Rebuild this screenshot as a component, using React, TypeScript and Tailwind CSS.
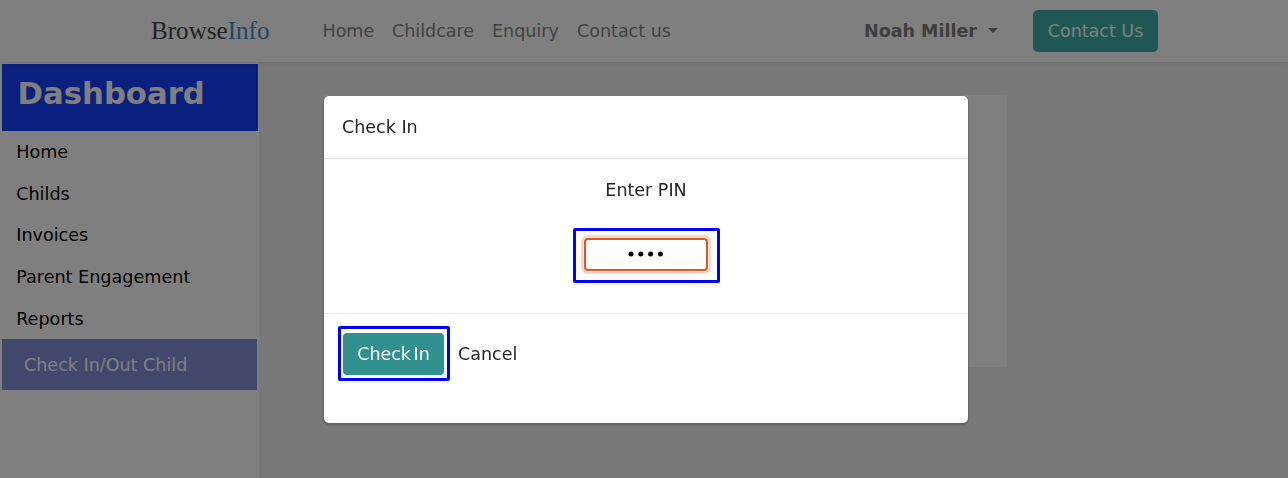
const navLinks = [
  { label: "Home", width: "w-[69.5px]" },
  { label: "Childcare", width: "w-[100px]" },
  { label: "Enquiry", width: "w-[85px]" },
  { label: "Contact us", width: "w-[100px]" },
];
const sideLinks = ["Home", "Childs", "Invoices", "Parent Engagement", "Reports"];

function Header() {
  return (
    <header className="relative z-10 flex h-[62px] shrink-0 items-center bg-white pl-[151px] shadow-[0_1px_3px_rgba(0,0,0,0.1)]">
      <a className="w-[171.5px] pb-px whitespace-nowrap font-['Liberation_Serif',serif] text-[25.1px] leading-none text-[#444444]">
        Browse<span className="text-[#3f8fc8]">Info</span>
      </a>
      <nav className="flex text-[#858585]">
        {navLinks.map((l) => (
          <a key={l.label} className={`${l.width} whitespace-nowrap`}>{l.label}</a>
        ))}
      </nav>
      <div className="ml-auto flex items-center gap-[11px] font-bold text-[#7c7c7c]">
        <span>Noah Miller</span>
        <svg width="10" height="5" viewBox="0 0 10 5" className="-mt-0.5">
          <path d="M0 0h10L5 5z" fill="currentColor" />
        </svg>
      </div>
      <button className="mr-[130px] ml-[35px] h-[42px] w-[125px] rounded-[5px] bg-[#3faea9] whitespace-nowrap text-white">
        Contact Us
      </button>
    </header>
  );
}

function Sidebar() {
  return (
    <aside className="flex w-[259px] shrink-0 flex-col bg-white pt-0.5 pr-px pl-0.5">
      <h1 className="h-[67px] bg-[#1440ff] pt-3 pl-[15.6px] text-[30.7px] leading-9 font-bold text-white">Dashboard</h1>
      <ul className="text-[17.6px] text-black">
        {sideLinks.map((l) => (
          <li key={l} className="flex h-[41.7px] items-center pl-[14.2px]">{l}</li>
        ))}
      </ul>
      <a className="mr-px flex h-[51px] items-center bg-[#8390d8] pl-[22px] text-[17.55px] text-white">Check In/Out Child</a>
    </aside>
  );
}

function PinDots() {
  return (
    <svg width="40" height="6" viewBox="0 0 40 6" fill="#000" className="mb-px">
      {[5, 14.8, 24.6, 34.4].map((x) => (
        <circle key={x} cx={x} cy="3" r="2.5" />
      ))}
    </svg>
  );
}

function CheckInDialog() {
  return (
    <div className="fixed inset-0 z-20 flex items-start bg-black/50 pt-24 pl-[324px]">
      <section role="dialog" className="flex h-[327px] w-[644px] flex-col rounded-[5px] bg-white text-[#212529] shadow-[0_1px_2px_1px_rgba(0,0,0,0.18)]">
        <header className="flex h-[63px] items-center border-b border-[#dee2e6] pl-[18px]">Check In</header>
        <div className="flex h-[155px] flex-col items-center border-b border-[#e9ecef] pt-[18px]">
          <label className="leading-[26px]">Enter PIN</label>
          <div className="mt-[25px] ml-px flex h-[55px] w-[147px] rounded-[2px] border-3 border-[#0000ff] pt-[7px] pl-2">
            <div className="flex h-[33px] w-[124px] items-center justify-center rounded-[4px] border-2 border-[#e95420] shadow-[0_0_0_1px_#fff2ed,0_0_0_3px_#fcd5c8]">
              <PinDots />
            </div>
          </div>
        </div>
        <footer className="flex items-center pt-3 pl-[14px]">
          <div className="flex h-[55px] w-[112px] items-center rounded-[2px] border-3 border-[#0000ff] pl-[2px]">
            <button className="h-[42px] w-[101px] rounded-[4px] bg-[#30908d] whitespace-nowrap text-white [word-spacing:-3px]">
              Check In
            </button>
          </div>
          <button className="ml-2">Cancel</button>
        </footer>
      </section>
    </div>
  );
}

export default function App() {
  return (
    <div className="flex h-[478px] w-[1288px] flex-col overflow-hidden bg-[#f0f0f0] font-['DejaVu_Sans',sans-serif] text-[17.5px] leading-[26px]">
      <Header />
      <div className="flex flex-1">
        <Sidebar />
        <main className="flex-1 pt-[33px] pl-[65px]">
          <div className="h-[272px] w-[683px] bg-white" />
        </main>
      </div>
      <CheckInDialog />
    </div>
  );
}
